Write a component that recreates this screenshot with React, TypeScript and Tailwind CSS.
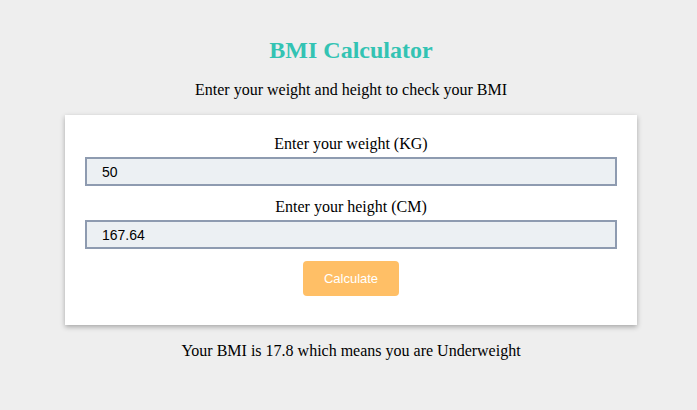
import React, { useState } from 'react'

const App = () => {
  const [weight, setWeight] = useState('50')
  const [height, setHeight] = useState('167.64')

  return (
    <div className="min-h-[410px] bg-[#eeeeee] pl-[5px] flex flex-col items-center font-['Liberation_Serif',serif] text-black">
      <h1 className="mt-[35px] text-[24px] leading-[30px] font-bold text-[#33c3b3]">BMI Calculator</h1>
      <p className="mt-[15px] text-[16px] leading-[20px]">Enter your weight and height to check your BMI</p>

      <div className="mt-[15px] w-[572px] bg-white shadow-[0_2px_5px_rgba(0,0,0,0.3)] flex flex-col items-center px-5 pt-[19px] pb-[29px]">
        <label className="text-[16px] leading-[20px]">Enter your weight (KG)</label>
        <input
          value={weight}
          onChange={(e) => setWeight(e.target.value)}
          className="mt-[3px] w-full h-[29px] border-2 border-[#8e9bb0] bg-[#ecf0f3] px-[15px] text-[14px] font-['Liberation_Sans',sans-serif] outline-none"
        />
        <label className="mt-[11px] text-[16px] leading-[20px]">Enter your height (CM)</label>
        <input
          value={height}
          onChange={(e) => setHeight(e.target.value)}
          className="mt-[3px] w-full h-[29px] border-2 border-[#8e9bb0] bg-[#ecf0f3] px-[15px] text-[14px] font-['Liberation_Sans',sans-serif] outline-none"
        />
        <button className="mt-[12px] w-[96px] h-[35px] rounded-[4px] bg-[#ffbf66] text-white text-[13px] font-['Liberation_Sans',sans-serif]">
          Calculate
        </button>
      </div>

      <p className="mt-[16px] text-[16px] leading-[20px]">Your BMI is 17.8 which means you are Underweight</p>
    </div>
  )
}

export default App
